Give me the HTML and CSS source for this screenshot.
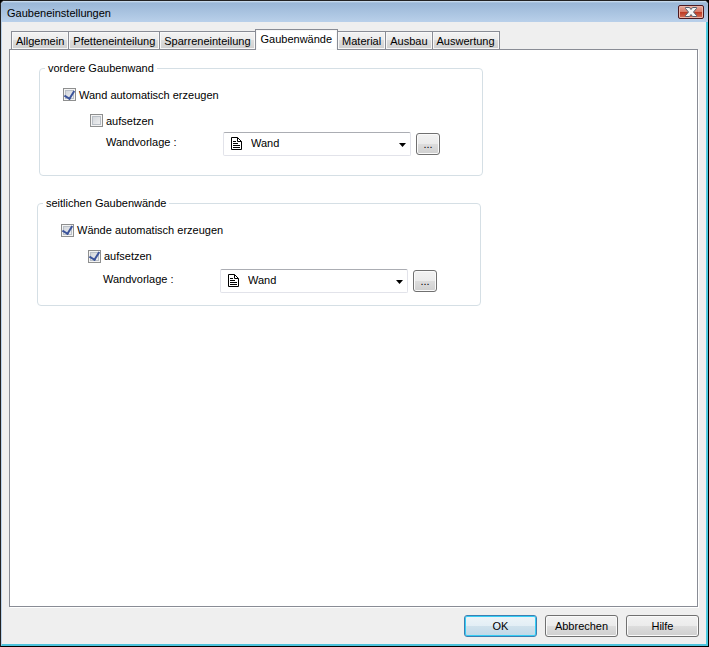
FILE: index.html
```html
<!DOCTYPE html>
<html lang="de">
<head>
<meta charset="utf-8">
<title>Gaubeneinstellungen</title>
<link rel="stylesheet" href="styles.css">
</head>
<body>
<main class="window">
  <header class="titlebar">
    <h1 class="title">Gaubeneinstellungen</h1>
    <button class="close" type="button" aria-label="Schließen">
      <svg width="14" height="10" viewBox="0 0 14 10"><path d="M1.5 .5h4L7 2.500 8.500 .5h4v1L9.500 5l3 3.500v1h-4L7 7.500 5.500 9.500h-4v-1L4.500 5l-3-3.500z" fill="#f4f4f4" stroke="#56606e"/></svg>
    </button>
  </header>
  <div class="body">
    <nav class="tabs" role="tablist">
      <button class="tab" role="tab" type="button">Allgemein</button>
      <button class="tab" role="tab" type="button">Pfetteneinteilung</button>
      <button class="tab" role="tab" type="button">Sparreneinteilung</button>
      <button class="tab active" role="tab" type="button" aria-selected="true">Gaubenwände</button>
      <button class="tab" role="tab" type="button">Material</button>
      <button class="tab" role="tab" type="button">Ausbau</button>
      <button class="tab" role="tab" type="button">Auswertung</button>
    </nav>
    <section class="panel" role="tabpanel">
      <fieldset class="group front">
        <legend>vordere Gaubenwand</legend>
        <label class="check"><input type="checkbox" checked>Wand automatisch erzeugen</label>
        <label class="check nested"><input type="checkbox">aufsetzen</label>
        <div class="template">
          <label class="caption" for="front-template">Wandvorlage :</label>
          <div class="combo">
            <svg class="doc" width="12" height="13" viewBox="0 0 12 13"><path d="M.5 .5h6l4 4v8h-10z" fill="#fff" stroke="#000"/><path d="M6.500 .5v4h4M2 4.500h3M2 6.500h5M2 8.500h7M2 10.500h7" fill="none" stroke="#000"/></svg>
            <select id="front-template"><option>Wand</option></select>
            <svg class="arrow" width="7" height="4" viewBox="0 0 7 4"><path d="M0 0h7L3.500 4z"/></svg>
          </div>
          <button class="button more" type="button">...</button>
        </div>
      </fieldset>
      <fieldset class="group side">
        <legend>seitlichen Gaubenwände</legend>
        <label class="check"><input type="checkbox" checked>Wände automatisch erzeugen</label>
        <label class="check nested"><input type="checkbox" checked>aufsetzen</label>
        <div class="template">
          <label class="caption" for="side-template">Wandvorlage :</label>
          <div class="combo">
            <svg class="doc" width="12" height="13" viewBox="0 0 12 13"><path d="M.5 .5h6l4 4v8h-10z" fill="#fff" stroke="#000"/><path d="M6.500 .5v4h4M2 4.500h3M2 6.500h5M2 8.500h7M2 10.500h7" fill="none" stroke="#000"/></svg>
            <select id="side-template"><option>Wand</option></select>
            <svg class="arrow" width="7" height="4" viewBox="0 0 7 4"><path d="M0 0h7L3.500 4z"/></svg>
          </div>
          <button class="button more" type="button">...</button>
        </div>
      </fieldset>
    </section>
    <footer class="actions">
      <button class="button primary" type="button">OK</button>
      <button class="button" type="button">Abbrechen</button>
      <button class="button" type="button">Hilfe</button>
    </footer>
  </div>
</main>
</body>
</html>
```
FILE: styles.css
```css
* { box-sizing: border-box; }

body {
  margin: 0;
  background: #000;
  color: #000;
  font: 11px/16px "Liberation Sans", Arial, sans-serif;
}

button, select { font: inherit; color: inherit; }

.window {
  display: flex;
  flex-direction: column;
  height: 100vh;
  border: 1px solid #222;
  border-right: 1px solid #000;
  border-bottom: 1px solid #000;
  border-radius: 5px 5px 0 0;
  background: #efefef;
  overflow: hidden;
}

.titlebar {
  display: flex;
  align-items: center;
  justify-content: space-between;
  height: 21px;
  padding: 0 4px 0 6px;
  background: linear-gradient(#d5e4f3 0, #9ab7d7 2px, #b9d0ea);
}

.title { margin: 0; padding-top: 3px; font-size: 11px; font-weight: normal; }

.close {
  display: flex;
  align-items: center;
  justify-content: center;
  width: 26px;
  height: 14px;
  margin-top: 1px;
  padding: 0;
  border: 1px solid #4c1820;
  border-radius: 2px;
  background: linear-gradient(#e7a99d, #d77a68 48%, #bd3923 52%, #d4705a);
  box-shadow: inset 0 0 0 1px #eab5a9;
}

.body {
  display: flex;
  flex: 1;
  flex-direction: column;
  padding: 7px;
  border: 1px solid #b9d1ea;
  border-top: 0;
  border-right: 2px solid #4dcbe0;
  border-bottom: 2px solid #4dc3dc;
}

.tabs { display: flex; align-items: flex-end; height: 20px; padding-left: 2px; }

.tab {
  height: 18px;
  margin-right: -1px;
  padding: 1px 4px 0;
  border: 1px solid #898c95;
  border-bottom: 0;
  background: linear-gradient(#f3f3f3, #ebebeb 50%, #dddddd 50%, #cfcfcf);
  box-shadow: inset 0 0 0 1px #f8f8f8;
  white-space: nowrap;
}

.tab.active {
  z-index: 1;
  height: 21px;
  margin-bottom: -1px;
  padding: 0 5px 2px;
  background: #fff;
}

.panel {
  flex: 1;
  margin-right: 1px;
  padding: 10px 29px 0 27px;
  border: 1px solid #898c95;
  background: #fff;
  box-shadow: 1px 1px #fff;
}

.group {
  width: 100%;
  max-width: 444px;
  min-width: 0;
  margin: 0;
  padding: 6px 8px 12px 23px;
  border: 1px solid #d5dfe5;
  border-radius: 4px;
}

.front { margin-left: 2px; padding-bottom: 19px; }
.side { margin-top: 19px; }

legend { margin-left: -18px; padding: 0 3px; }

.check { display: flex; align-items: center; gap: 3px; height: 26px; }
.front .check { height: 25px; }
.nested { margin-left: 27px; }
.front .nested { padding-top: 2px; }

.check input {
  display: grid;
  place-items: center;
  width: 13px;
  height: 13px;
  margin: 0;
  border: 1px solid #8e8f8f;
  background: linear-gradient(135deg, #cbcfd5, #f6f6f6);
  box-shadow: inset 0 0 0 1px #f4f4f4, inset 0 0 0 2px #b9bfc6;
  appearance: none;
}

.check input:checked::after {
  content: "";
  width: 5px;
  height: 8px;
  margin-top: -2px;
  border: solid #3b539b;
  border-width: 0 2px 2px 0;
  transform: rotate(32deg);
}

.template { display: flex; align-items: center; height: 24px; }
.caption { width: 117px; margin-left: 42px; padding-bottom: 4px; }
.front .caption { margin-left: 43px; }

.combo { position: relative; width: 188px; }

select {
  display: block;
  width: 100%;
  height: 24px;
  padding: 0 20px 2px 27px;
  border: 1px solid #e2e3ea;
  border-top-color: #abadb3;
  border-radius: 2px;
  background: #fff;
  appearance: none;
}

.doc { position: absolute; top: 5px; left: 8px; }
.arrow { position: absolute; top: 11px; right: 5px; }

.button {
  width: 73px;
  height: 22px;
  padding: 0;
  border: 1px solid #707070;
  border-radius: 3px;
  background: linear-gradient(#f2f2f2, #ebebeb 50%, #dddddd 50%, #cfcfcf);
  box-shadow: inset 0 0 0 1px #fafafa;
}

.more { width: 24px; margin-left: 5px; }

.primary {
  border-color: #3c7fb1;
  background: linear-gradient(#edf4f8, #e2eef5 50%, #cfe1ec 50%, #c0d9e8);
  box-shadow: inset 0 0 0 1px #35cdf5;
}

.actions { display: flex; justify-content: flex-end; gap: 8px; padding-top: 8px; }
```
